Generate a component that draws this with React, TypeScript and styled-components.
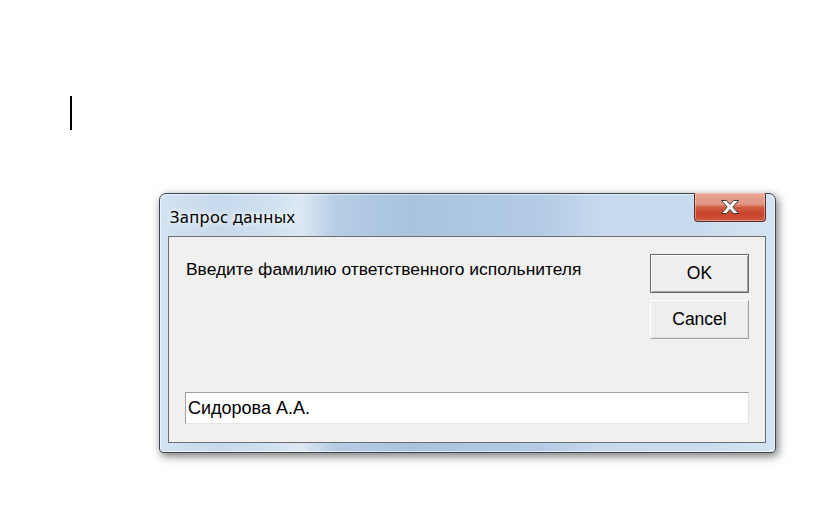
import React from "react";
import styled, { createGlobalStyle } from "styled-components";

const Global = createGlobalStyle`
  html, body { margin: 0; padding: 0; background: #ffffff; }
  body { width: 821px; height: 528px; overflow: hidden; }
`;

const Page = styled.div`
  display: flex;
  flex-direction: column;
  align-items: flex-start;
  padding: 96px 0 0 70px;
`;

const Caret = styled.div`
  width: 2px;
  height: 34px;
  background: #000;
`;

const Window = styled.div`
  margin: 63px 0 0 89px;
  width: 617px;
  height: 260px;
  box-sizing: border-box;
  border: 1px solid #3c4650;
  border-radius: 7px 7px 4px 4px;
  background: linear-gradient(90deg,
    #d3e2f2 0px,
    #c7d9ed 60px,
    #cfe0f1 110px,
    #dce8f4 140px,
    #b6cde5 175px,
    #a9c3df 250px,
    #b3cbe5 380px,
    #c6d9ee 440px,
    #c9dcef 540px,
    #d5e4f3 617px);
  box-shadow: 2px 3px 10px rgba(0, 0, 0, 0.55), inset 0 0 0 1px rgba(255,255,255,0.6);
  display: flex;
  flex-direction: column;
  padding: 0 9px 9px 8px;
`;

const TitleBar = styled.div`
  height: 42px;
  display: flex;
  align-items: flex-start;
  justify-content: space-between;
`;

const Title = styled.div`
  font-family: "Noto Sans", "Open Sans", sans-serif;
  font-size: 16.5px;
  letter-spacing: 0.3px;
  color: #000;
  padding: 11px 0 0 2px;
  text-shadow: 0 0 8px rgba(255,255,255,1), 0 0 4px rgba(255,255,255,0.9);
`;

const CloseButton = styled.div`
  margin-top: -1px;
  width: 72px;
  height: 29px;
  box-sizing: border-box;
  border: 1px solid #52312c;
  border-top: none;
  border-radius: 0 0 4px 4px;
  background: linear-gradient(180deg,
    #e9a797 0%,
    #e39483 40%,
    #cf5a40 52%,
    #c7442c 75%,
    #d0583c 100%);
  box-shadow: inset 0 0 0 1px rgba(255, 220, 210, 0.45);
  display: flex;
  align-items: center;
  justify-content: center;
`;

const Panel = styled.div`
  flex: 1;
  background: #f0f0f0;
  border: 1px solid #6d6d6d;
  display: flex;
  flex-direction: column;
  padding: 17px 16px 18px 16px;
  font-family: "Liberation Sans", Arial, sans-serif;
  font-size: 17.4px;
  color: #000;
`;

const TopRow = styled.div`
  flex: 1;
  display: flex;
  justify-content: space-between;
  align-items: flex-start;
`;

const Prompt = styled.div`
  padding: 5px 0 0 1px;
`;

const Buttons = styled.div`
  display: flex;
  flex-direction: column;
  gap: 7px;
`;

const Button = styled.div<{ $default?: boolean }>`
  width: 99px;
  height: 39px;
  box-sizing: border-box;
  display: flex;
  align-items: center;
  justify-content: center;
  background: #eeeeee;
  font-size: 17.5px;
  border: 1px solid;
  border-color: ${(p) =>
    p.$default ? "#696969 #696969 #696969 #696969" : "#ffffff #a0a0a0 #a0a0a0 #ffffff"};
  box-shadow: ${(p) =>
    p.$default
      ? "inset 1px 1px 0 #ffffff, inset -1px -1px 0 #a0a0a0"
      : "inset -1px -1px 0 #e3e3e3"};
`;

const Input = styled.div`
  height: 32px;
  box-sizing: border-box;
  background: #ffffff;
  border: 1px solid;
  border-color: #a0a0a0 #e3e3e3 #e3e3e3 #a0a0a0;
  display: flex;
  align-items: center;
  padding-left: 2px;
  font-size: 18px;
`;

export default function App() {
  return (
    <>
      <Global />
      <Page>
        <Caret />
        <Window>
          <TitleBar>
            <Title>Запрос данных</Title>
            <CloseButton>
              <svg width="20" height="16" viewBox="0 0 20 16">
                <path
                  d="M1.5 1.5 H6.5 L10 5.5 L13.5 1.5 H18.5 L12.8 8 L18.5 14.5 H13.5 L10 10.5 L6.5 14.5 H1.5 L7.2 8 Z"
                  fill="#ffffff"
                  stroke="#3c3c3c"
                  strokeWidth="1"
                  strokeLinejoin="round"
                />
              </svg>
            </CloseButton>
          </TitleBar>
          <Panel>
            <TopRow>
              <Prompt>Введите фамилию ответственного испольнителя</Prompt>
              <Buttons>
                <Button $default>OK</Button>
                <Button>Cancel</Button>
              </Buttons>
            </TopRow>
            <Input>Сидорова А.А.</Input>
          </Panel>
        </Window>
      </Page>
    </>
  );
}
